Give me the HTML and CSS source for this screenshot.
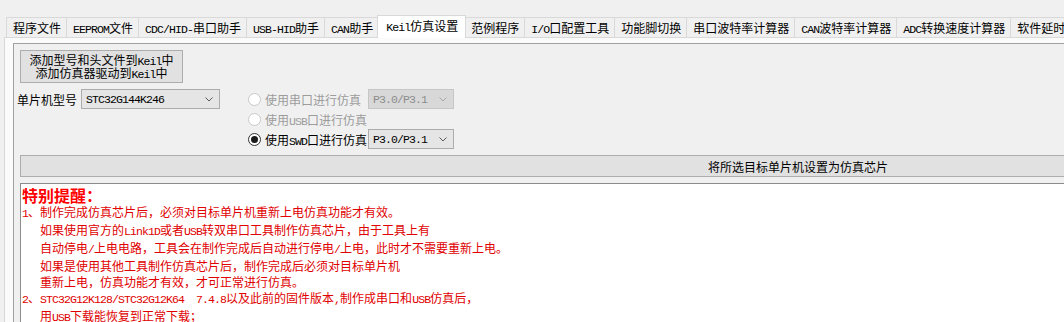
FILE: index.html
```html
<!DOCTYPE html>
<html lang="zh-CN">
<head>
  <meta charset="UTF-8">
  <title>Keil仿真设置</title>
  <link rel="stylesheet" href="styles.css">
</head>
<body>

<div class="tabs">
  <div class="tab">程序文件</div>
  <div class="tab"><span class="lat">EEPROM</span>文件</div>
  <div class="tab"><span class="lat">CDC/HID-</span>串口助手</div>
  <div class="tab"><span class="lat">USB-HID</span>助手</div>
  <div class="tab"><span class="lat">CAN</span>助手</div>
  <div class="tab on"><span class="lat">Keil</span>仿真设置</div>
  <div class="tab">范例程序</div>
  <div class="tab"><span class="lat">I/O</span>口配置工具</div>
  <div class="tab">功能脚切换</div>
  <div class="tab">串口波特率计算器</div>
  <div class="tab"><span class="lat">CAN</span>波特率计算器</div>
  <div class="tab"><span class="lat">ADC</span>转换速度计算器</div>
  <div class="tab">软件延时计算器</div>
</div>

<div class="page">
  <div class="panel">
    <button class="btn add">
      <span>添加型号和头文件到<span class="lat">Keil</span>中</span>
      <span>添加仿真器驱动到<span class="lat">Keil</span>中</span>
    </button>

    <div class="row">
      <div class="mcu">
        <span>单片机型号</span>
        <div class="select">
          <span class="lat">STC32G144K246</span>
          <svg class="chev" width="8" height="5" viewBox="0 0 8 5"><path d="M0.5 0.5 L4 4 L7.5 0.5" fill="none" stroke="#5a5a5a"/></svg>
        </div>
      </div>

      <div class="modes">
        <div class="mrow">
          <div class="opt off"><span class="radio"></span><span>使用串口进行仿真</span></div>
          <div class="select dis">
            <span class="lat">P3.0/P3.1</span>
            <svg class="chev" width="8" height="5" viewBox="0 0 8 5"><path d="M0.5 0.5 L4 4 L7.5 0.5" fill="none" stroke="#a8a8a8"/></svg>
          </div>
        </div>
        <div class="mrow">
          <div class="opt off"><span class="radio"></span><span>使用<span class="lat">USB</span>口进行仿真</span></div>
        </div>
        <div class="mrow">
          <div class="opt"><span class="radio checked"></span><span>使用<span class="lat">SWD</span>口进行仿真</span></div>
          <div class="select">
            <span class="lat">P3.0/P3.1</span>
            <svg class="chev" width="8" height="5" viewBox="0 0 8 5"><path d="M0.5 0.5 L4 4 L7.5 0.5" fill="none" stroke="#5a5a5a"/></svg>
          </div>
        </div>
      </div>
    </div>

    <button class="btn wide">将所选目标单片机设置为仿真芯片</button>

    <div class="notes">
      <h1>特别提醒：</h1>
      <p><span class="lat">1</span>、制作完成仿真芯片后，必须对目标单片机重新上电仿真功能才有效。</p>
      <p class="ind">如果使用官方的<span class="lat">Link1D</span>或者<span class="lat">USB</span>转双串口工具制作仿真芯片，由于工具上有</p>
      <p class="ind">自动停电<span class="lat">/</span>上电电路，工具会在制作完成后自动进行停电<span class="lat">/</span>上电，此时才不需要重新上电。</p>
      <p class="ind">如果是使用其他工具制作仿真芯片后，制作完成后必须对目标单片机</p>
      <p class="ind">重新上电，仿真功能才有效，才可正常进行仿真。</p>
      <p><span class="lat">2</span>、<span class="lat">STC32G12K128/STC32G12K64  7.4.8</span>以及此前的固件版本<span class="lat">,</span>制作成串口和<span class="lat">USB</span>仿真后，</p>
      <p class="ind">用<span class="lat">USB</span>下载能恢复到正常下载；</p>
      <p><span class="lat">3</span>、<span class="lat">STC32G12K128/STC32G12K64  7.4.9/7.4.10</span>固件版本<span class="lat">,</span>制作成串口和<span class="lat">USB</span>仿真后，</p>
    </div>
  </div>
</div>

</body>
</html>
```

FILE: styles.css
```css
* {
  box-sizing: border-box;
}

body {
  margin: 0;
  height: 322px;
  overflow: hidden;
  background: #f0f0f0;
  color: #000;
  font-family: "Noto Sans CJK SC", sans-serif;
  font-size: 12px;
}

/* half-width latin runs, 6px per char */
.lat {
  font-family: "Liberation Mono", monospace;
  font-size: 11.5px;
  letter-spacing: -0.9px;
  white-space: pre;
}

/* tab strip */
.tabs {
  display: flex;
  align-items: flex-end;
  height: 37px;
  padding: 17px 0 0 6px;
  white-space: nowrap;
}

.tab {
  flex: none;
  height: 20px;
  line-height: 19px;
  padding: 0 5px 0 6px;
  margin-left: -1px;
  border: 1px solid #d9d9d9;
  border-bottom: none;
  background: #f0f0f0;
}

.tab:first-child {
  margin-left: 0;
}

.tab.on {
  position: relative;
  z-index: 2;
  height: 23px;
  line-height: 19px;
  margin: 0 -1px -1px -2px;
  padding: 0 7px 0 8px;
  background: #fff;
}

/* tab page */
.page {
  margin-left: 4px;
  height: 285px;
  padding: 5px 0 0 8px;
  border-left: 1px solid #d9d9d9;
  border-top: 1px solid #d9d9d9;
  background: #fbfbfb;
}

.panel {
  width: 1600px;
  height: 300px;
  padding: 6px 0 0 3px;
  border: 1px solid #a0a0a0;
  background: #f0f0f0;
}

.btn {
  display: flex;
  align-items: center;
  justify-content: center;
  margin: 0 0 0 3px;
  padding: 0;
  font: inherit;
  color: #000;
  background: #e1e1e1;
  border: 1px solid #adadad;
  border-radius: 0;
}

.add {
  flex-direction: column;
  width: 163px;
  height: 33px;
  line-height: 11px;
}

.add > span {
  display: block;
}

.row {
  display: flex;
  height: 60px;
  margin-top: 6px;
}

.mcu {
  display: flex;
  align-items: center;
  gap: 4px;
  height: 20px;
}

.select {
  flex: none;
  display: flex;
  align-items: center;
  justify-content: space-between;
  height: 20px;
  padding: 0 6px 0 4px;
  background: #e5e5e5;
  border: 1px solid #acacac;
}

.mcu .select {
  width: 139px;
}

.select.dis {
  background: #d8d8d8;
  border-color: #c6c6c6;
  color: #8d8d8d;
}

.modes {
  margin-left: 28px;
  display: flex;
  flex-direction: column;
}

.mrow {
  display: flex;
  height: 20px;
  align-items: center;
}

.mrow .select {
  width: 86px;
}

.opt {
  flex: none;
  display: flex;
  align-items: center;
  gap: 4px;
  width: 120px;
  white-space: nowrap;
}

.opt.off {
  color: #9c9c9c;
}

.radio {
  flex: none;
  display: flex;
  align-items: center;
  justify-content: center;
  width: 13px;
  height: 13px;
  border-radius: 50%;
  border: 1px solid #333;
  background: #fff;
}

.off .radio {
  border-color: #c8c8c8;
}

.radio.checked::after {
  content: "";
  width: 7px;
  height: 7px;
  border-radius: 50%;
  background: #1a1a1a;
}

.wide {
  width: 1556px;
  height: 22px;
  margin-top: 6px;
}

/* red reminder box */
.notes {
  width: 1556px;
  height: 200px;
  margin: 6px 0 0 3px;
  padding: 2px 0 0 1px;
  background: #fff;
  border: 1px solid #8c8c8c;
  color: #e00000;
  white-space: nowrap;
}

.notes h1 {
  margin: 0;
  font-size: 16px;
  font-weight: bold;
  line-height: 18px;
  color: #f00;
}

.notes p {
  margin: 0;
  line-height: 16px;
}

.notes .ind {
  padding-left: 18px;
}
```
